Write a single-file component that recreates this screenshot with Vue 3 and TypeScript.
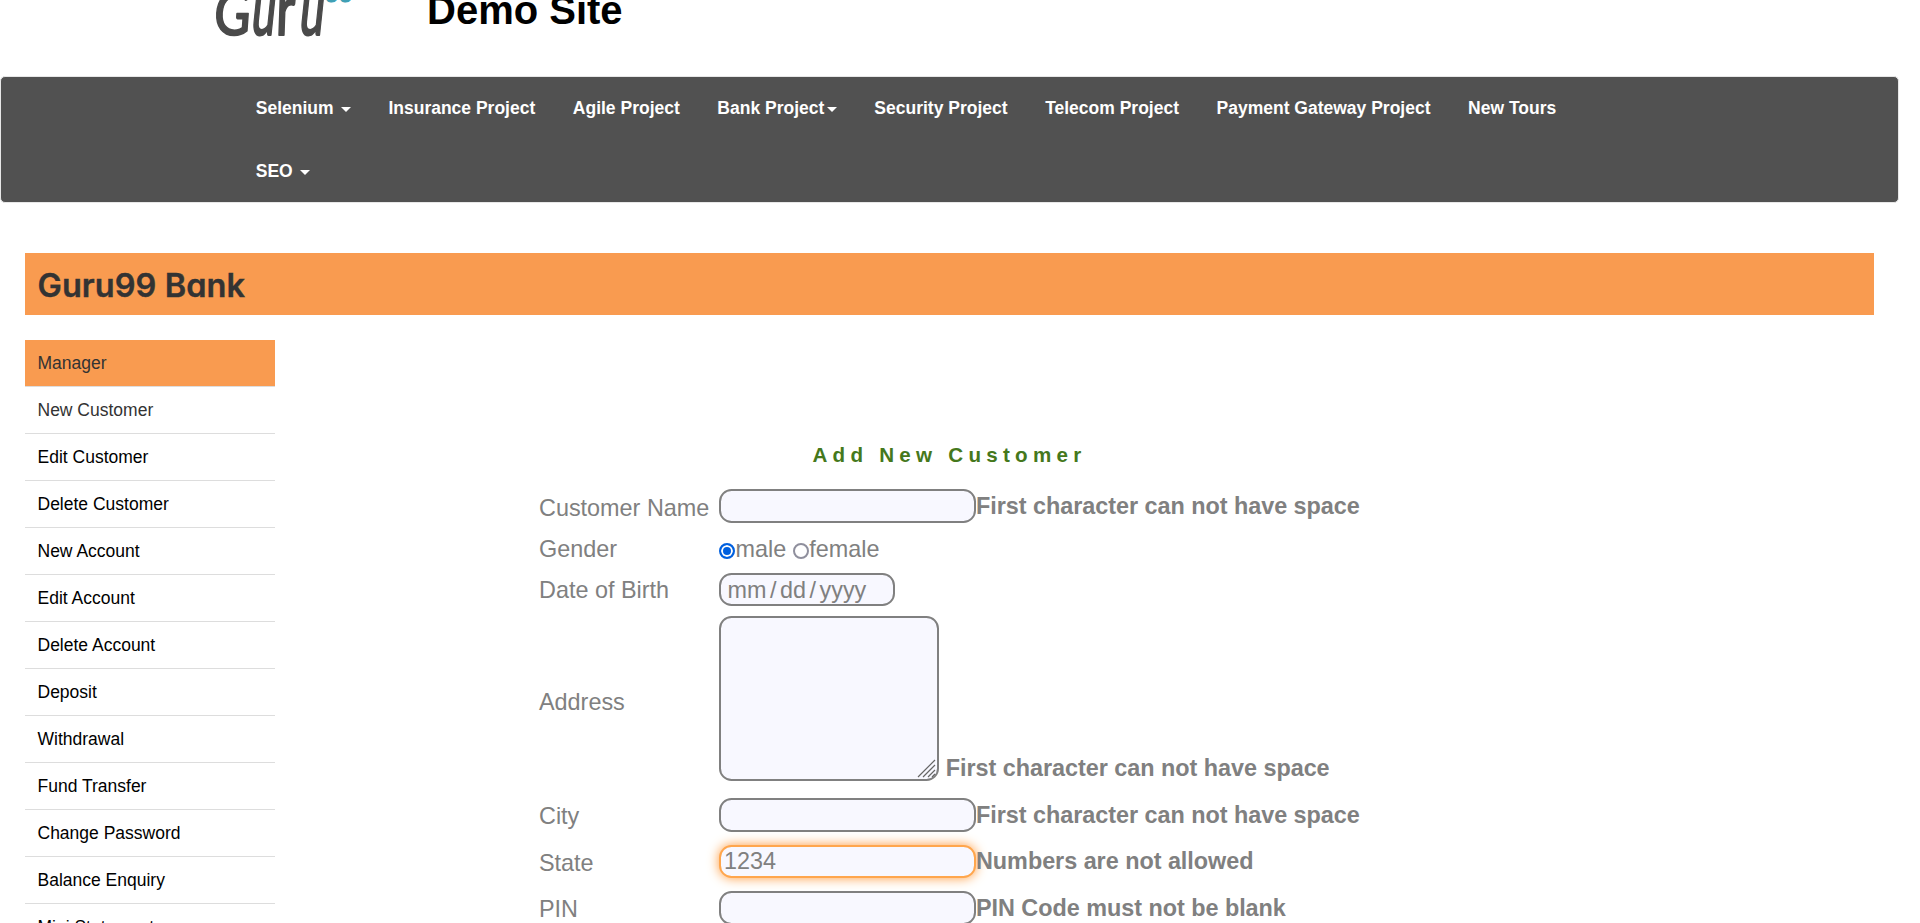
<script setup lang="ts">
import { ref } from 'vue'

interface NavItem { label: string; caret?: boolean; tight?: boolean }
interface Field { key: string; label: string; error: string }

const nav: NavItem[] = [
  { label: 'Selenium', caret: true },
  { label: 'Insurance Project' },
  { label: 'Agile Project' },
  { label: 'Bank Project', caret: true, tight: true },
  { label: 'Security Project' },
  { label: 'Telecom Project' },
  { label: 'Payment Gateway Project' },
  { label: 'New Tours' },
  { label: 'SEO', caret: true },
]

const menu: string[] = [
  'Manager', 'New Customer', 'Edit Customer', 'Delete Customer', 'New Account',
  'Edit Account', 'Delete Account', 'Deposit', 'Withdrawal', 'Fund Transfer',
  'Change Password', 'Balance Enquiry', 'Mini Statement',
]

const lowerFields: Field[] = [
  { key: 'city', label: 'City', error: 'First character can not have space' },
  { key: 'state', label: 'State', error: 'Numbers are not allowed' },
  { key: 'pin', label: 'PIN', error: 'PIN Code must not be blank' },
]

const values = ref<Record<string, string>>({ name: '', city: '', state: '1234', pin: '' })
const gender = ref<'m' | 'f'>('m')
const address = ref('')
</script>

<template>
  <div class="page">
    <header class="top">
      <svg class="logo" width="160" height="50" viewBox="0 0 160 50" role="img" aria-label="Guru99">
        <g class="logo-word">
          <text transform="translate(1 35.3) skewX(-4) scale(.98 1.2)">G</text>
          <text transform="translate(38 35.3) skewX(-6) scale(.84 1.42)">u</text>
          <text transform="translate(63.5 35.3) skewX(-2) scale(1 1.42)">r</text>
          <text transform="translate(86 35.3) skewX(-6) scale(.86 1.42)">u</text>
        </g>
        <text class="logo-num" x="113" y="1.5">99</text>
      </svg>
      <h2 class="site-title">Demo Site</h2>
    </header>

    <nav class="navbar">
      <ul class="nav-list">
        <li v-for="item in nav" :key="item.label" class="nav-item">
          <a>{{ item.label }}<b v-if="item.caret" class="caret" :class="{ tight: item.tight }"></b></a>
        </li>
      </ul>
    </nav>

    <div class="bank-bar"><h2 class="bank-name">Guru99 Bank</h2></div>

    <div class="body">
      <ul class="side">
        <li v-for="(m, i) in menu" :key="m" class="side-item" :class="{ active: i === 0, current: i === 1 }">{{ m }}</li>
      </ul>

      <main class="form">
        <p class="heading">Add New Customer</p>

        <div class="row name">
          <label class="label">Customer Name</label>
          <input v-model="values.name" class="field" type="text" />
          <span class="error">First character can not have space</span>
        </div>

        <div class="row gender">
          <label class="label">Gender</label>
          <span class="radio" :class="{ on: gender === 'm' }" @click="gender = 'm'"></span><span class="opt male">male</span>
          <span class="radio" :class="{ on: gender === 'f' }" @click="gender = 'f'"></span><span class="opt">female</span>
        </div>

        <div class="row dob">
          <label class="label">Date of Birth</label>
          <div class="date"><span>mm</span><i>/</i><span>dd</span><i>/</i><span>yyyy</span></div>
        </div>

        <div class="row address">
          <label class="label">Address</label>
          <div class="area-wrap">
            <textarea v-model="address" class="area"></textarea>
            <svg class="grip" width="20" height="20" viewBox="0 0 20 20">
              <path d="M1 18 18 1M6 18 18 6M11 18 18 11M15 18 18 15" stroke="#666" stroke-width="1.2" fill="none" />
            </svg>
          </div>
          <span class="error">First character can not have space</span>
        </div>

        <div v-for="f in lowerFields" :key="f.key" class="row" :class="f.key">
          <label class="label">{{ f.label }}</label>
          <input v-model="values[f.key]" class="field" :class="{ focused: f.key === 'state' }" type="text" />
          <span class="error">{{ f.error }}</span>
        </div>
      </main>
    </div>
  </div>
</template>

<style>
body { margin: 0; background: #fff; overflow: hidden; }
</style>

<style scoped>
* { box-sizing: border-box; }
.page {
  width: 1899px;
  height: 923px;
  overflow: hidden;
  font-family: "Liberation Sans", Arial, sans-serif;
  font-size: 17.5px;
  color: #000;
}
ul { list-style: none; margin: 0; padding: 0; }
.top { display: flex; height: 76px; padding-left: 212px; }
.logo { flex: none; display: block; }
.logo-word { font: 500 51px Lato, sans-serif; fill: #4a4a4a; stroke: #4a4a4a; stroke-width: 1.4; stroke-linejoin: round; }
.logo-num { font: 700 25px "Liberation Sans", Arial, sans-serif; fill: #3fa0b5; stroke: #3fa0b5; stroke-width: 1; }
.site-title { margin: -13px 0 0 55px; font-size: 40px; line-height: 46px; font-weight: 700; }

.navbar { height: 127px; background: #515151; border: 1px solid #e7e7e7; border-radius: 5px; padding-left: 236px; }
.nav-list { display: flex; flex-wrap: wrap; width: 1425px; }
.nav-item { height: 62.5px; padding: 18.75px 18.78px; line-height: 25px; font-weight: 700; color: #fff; white-space: nowrap; }
.nav-item:last-child { padding-top: 19.5px; }
.caret {
  display: inline-block;
  margin-left: 7.3px;
  vertical-align: middle;
  border-top: 5px solid #fff;
  border-left: 5px solid transparent;
  border-right: 5px solid transparent;
}
.caret.tight { margin-left: 2.5px; }

.bank-bar { margin: 50px 25px 25px; height: 62px; width: 1848.5px; background: #f99b50; padding-left: 12.5px; }
.bank-name {
  margin: 0;
  font: 600 32.5px/62px Inter, sans-serif;
  font-feature-settings: "cv11" 1;
  letter-spacing: 0.05px;
  color: #333;
  -webkit-text-stroke: 0.4px #333;
  padding-top: 2px;
}

.body { display: flex; padding-left: 25px; }
.side { width: 250px; flex: none; }
.side-item { height: 47px; border-bottom: 1px solid #ddd; padding: 11px 0 0 12.5px; line-height: 25px; }
.side-item.active { background: #f99b50; background-clip: padding-box; color: #333; }
.side-item.current { color: #333; }

.form { margin-left: 264px; width: 1000px; color: #808080; font-size: 23.4px; line-height: 27px; }
.heading {
  margin: 0;
  padding: 101px 0 0 273.5px;
  height: 149px;
  font-size: 20.6px;
  font-weight: 700;
  letter-spacing: 5.25px;
  color: #45781c;
}
.row { display: flex; align-items: flex-start; height: 47px; white-space: nowrap; }
.label { width: 180px; flex: none; padding: 4.5px 0 0 0; }
.field {
  width: 257px;
  height: 34px;
  margin: 0;
  padding: 0 3px 2px;
  border: 2px solid #808080;
  border-radius: 12.5px;
  background: #f8f8ff;
  color: #808080;
  font: 23.4px/27px "Liberation Sans", Arial, sans-serif;
  outline: none;
}
.field.focused { height: 33px; padding-bottom: 0; border-color: #ffa64d; box-shadow: 0 0 12px #ff9a3c; }
.error { position: relative; font-weight: 700; padding-top: 3.5px; letter-spacing: -0.03px; }

.name { height: 42px; }
.name .label { padding-top: 5.5px; }
.gender { height: 42px; }
.gender .label { padding-top: 4.5px; }
.radio { width: 16px; height: 16px; margin-top: 12px; border: 2px solid #8f8f9d; border-radius: 50%; background: #fff; }
.radio.on { border: 2px solid #0060df; background: #0060df; box-shadow: inset 0 0 0 2px #fff; }
.opt { padding-top: 4.5px; margin-left: 0.5px; }
.male { margin-right: 6.5px; }

.dob { height: 43px; }
.dob .label { padding-top: 3.5px; }
.date { display: flex; width: 176px; height: 33px; padding: 1.5px 0 0 6.5px; border: 2px solid #808080; border-radius: 12.5px; background: #f8f8ff; }
.date i { font-style: normal; margin: 0 3.5px; }

.address { height: 182px; }
.address .label { padding-top: 72.5px; }
.area-wrap { position: relative; width: 220px; height: 165px; flex: none; }
.area { display: block; width: 220px; height: 165px; border: 2px solid #808080; border-radius: 12.5px; background: #f8f8ff; resize: none; outline: none; margin: 0; }
.grip { position: absolute; right: 2px; bottom: 2px; }
.address .error { padding: 139px 0 0 6.8px; }

.state { height: 46px; }
.state .error { padding-top: 2.5px; }
</style>
